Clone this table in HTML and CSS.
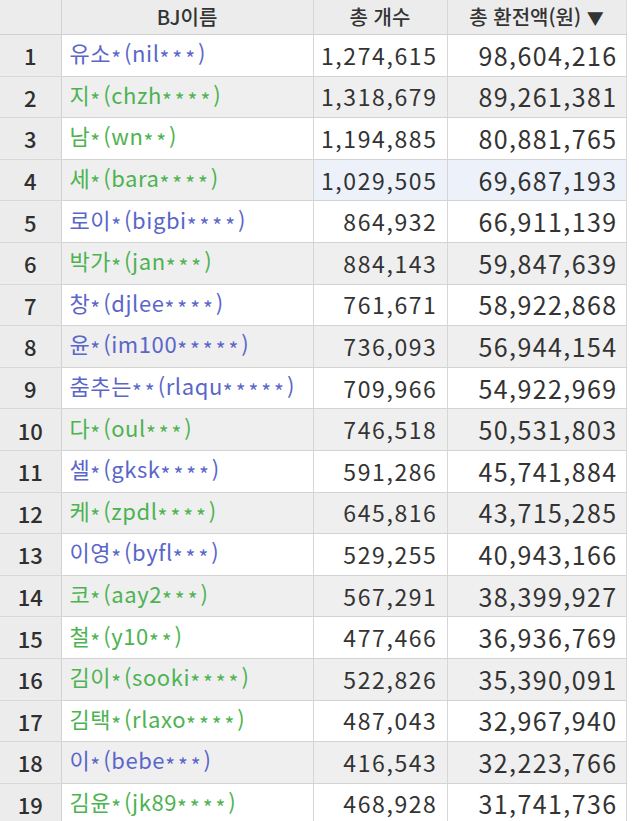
FILE: index.html
```html
<!DOCTYPE html>
<html lang="ko">
<head>
<meta charset="utf-8">
<title>BJ 환전 순위</title>
<link rel="stylesheet" href="styles.css">
</head>
<body>
<div class="page">
<table class="rank">
<colgroup>
<col class="c-idx"><col class="c-name"><col class="c-cnt"><col class="c-amt">
</colgroup>
<thead>
<tr><th></th><th>BJ이름</th><th>총 개수</th><th>총 환전액(원) <span class="sort">▼</span></th></tr>
</thead>
<tbody>
<tr><td class="idx">1</td><td class="name blue">유소<span class="m">*</span>(nil<span class="m">***</span>)</td><td class="num">1,274,615</td><td class="num">98,604,216</td></tr>
<tr><td class="idx">2</td><td class="name green">지<span class="m">*</span>(chzh<span class="m">****</span>)</td><td class="num">1,318,679</td><td class="num">89,261,381</td></tr>
<tr><td class="idx">3</td><td class="name green">남<span class="m">*</span>(wn<span class="m">**</span>)</td><td class="num">1,194,885</td><td class="num">80,881,765</td></tr>
<tr class="sel"><td class="idx">4</td><td class="name green">세<span class="m">*</span>(bara<span class="m">****</span>)</td><td class="num">1,029,505</td><td class="num">69,687,193</td></tr>
<tr><td class="idx">5</td><td class="name blue">로이<span class="m">*</span>(bigbi<span class="m">****</span>)</td><td class="num">864,932</td><td class="num">66,911,139</td></tr>
<tr><td class="idx">6</td><td class="name green">박가<span class="m">*</span>(jan<span class="m">***</span>)</td><td class="num">884,143</td><td class="num">59,847,639</td></tr>
<tr><td class="idx">7</td><td class="name blue">창<span class="m">*</span>(djlee<span class="m">****</span>)</td><td class="num">761,671</td><td class="num">58,922,868</td></tr>
<tr><td class="idx">8</td><td class="name blue">윤<span class="m">*</span>(im100<span class="m">*****</span>)</td><td class="num">736,093</td><td class="num">56,944,154</td></tr>
<tr><td class="idx">9</td><td class="name blue">춤추는<span class="m">**</span>(rlaqu<span class="m">*****</span>)</td><td class="num">709,966</td><td class="num">54,922,969</td></tr>
<tr><td class="idx">10</td><td class="name green">다<span class="m">*</span>(oul<span class="m">***</span>)</td><td class="num">746,518</td><td class="num">50,531,803</td></tr>
<tr><td class="idx">11</td><td class="name blue">셀<span class="m">*</span>(gksk<span class="m">****</span>)</td><td class="num">591,286</td><td class="num">45,741,884</td></tr>
<tr><td class="idx">12</td><td class="name green">케<span class="m">*</span>(zpdl<span class="m">****</span>)</td><td class="num">645,816</td><td class="num">43,715,285</td></tr>
<tr><td class="idx">13</td><td class="name blue">이영<span class="m">*</span>(byfl<span class="m">***</span>)</td><td class="num">529,255</td><td class="num">40,943,166</td></tr>
<tr><td class="idx">14</td><td class="name green">코<span class="m">*</span>(aay2<span class="m">***</span>)</td><td class="num">567,291</td><td class="num">38,399,927</td></tr>
<tr><td class="idx">15</td><td class="name green">철<span class="m">*</span>(y10<span class="m">**</span>)</td><td class="num">477,466</td><td class="num">36,936,769</td></tr>
<tr><td class="idx">16</td><td class="name green">김이<span class="m">*</span>(sooki<span class="m">****</span>)</td><td class="num">522,826</td><td class="num">35,390,091</td></tr>
<tr><td class="idx">17</td><td class="name green">김택<span class="m">*</span>(rlaxo<span class="m">****</span>)</td><td class="num">487,043</td><td class="num">32,967,940</td></tr>
<tr><td class="idx">18</td><td class="name blue">이<span class="m">*</span>(bebe<span class="m">***</span>)</td><td class="num">416,543</td><td class="num">32,223,766</td></tr>
<tr><td class="idx">19</td><td class="name green">김윤<span class="m">*</span>(jk89<span class="m">****</span>)</td><td class="num">468,928</td><td class="num">31,741,736</td></tr>
</tbody>
</table>
</div>
</body>
</html>
```
FILE: styles.css
```css
html, body {
  margin: 0;
  padding: 0;
  background: #ffffff;
}
.page {
  width: 639px;
  height: 821px;
  overflow: hidden;
  font-family: "Noto Sans CJK KR", "Noto Sans", sans-serif;
}
.rank {
  border-collapse: collapse;
  table-layout: fixed;
  width: 626px;
}
.c-idx { width: 61px; }
.c-name { width: 252px; }
.c-cnt { width: 134px; }
.c-amt { width: 179px; }

.rank th {
  height: 34px;
  padding: 0;
  background: #ececec;
  color: #333;
  font-size: 20px;
  font-weight: 500;
  text-align: center;
  border-right: 1px solid #d6d6d6;
  border-bottom: 1px solid #d0d0d0;
  line-height: 1;
}
.rank th:first-child {
  border-right: 1px solid #d2d2d2;
}
.rank th:last-child { border-right: 1px solid #dcdcdc; }
.sort { font-size: 17px; }

.rank td {
  height: 40.6px;
  padding: 0;
  border-bottom: 1px solid #d3d3d3;
  border-right: 1px solid #d6d6d6;
  font-size: 22px;
  font-weight: 400;
  line-height: 1;
  white-space: nowrap;
  overflow: hidden;
}
.rank tbody tr:nth-child(odd) td { background: #ffffff; }
.rank tbody tr:nth-child(even) td { background: #efeff0; }
.rank tbody tr.sel td.num { background: #edf2fa; }

.rank td.idx {
  background: #ececec !important;
  text-align: center;
  color: #2f2f2f;
  font-weight: 500;
  border-right: 1px solid #d2d2d2;
  border-bottom-color: #d8d8d8;
}
.rank td.name {
  padding-left: 8px;
  letter-spacing: 0.6px;
}
.m {
  font-size: 21px;
  letter-spacing: 3px;
  vertical-align: -5px;
}
.rank td.num {
  text-align: right;
  color: #333;
}
.rank td.num:nth-child(3) {
  padding-right: 9px;
  font-size: 23px;
  letter-spacing: 1.6px;
}
.rank td.num:nth-child(4) {
  padding-right: 8px;
  font-size: 25px;
  letter-spacing: 1.4px;
}
.blue { color: #5a66c9; }
.green { color: #4db350; }
```
